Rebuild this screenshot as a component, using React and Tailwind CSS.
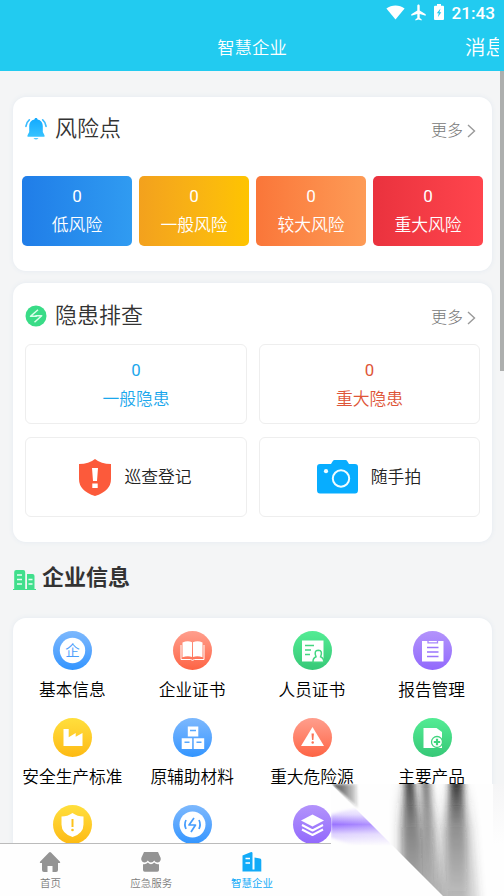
const FONT = "font-['Roboto','Noto_Sans_CJK_SC',sans-serif]";

function StatusBar() {
  return (
    <div className="flex h-6 items-center justify-end pr-[9px] text-white">
      <svg className="mr-[6px] h-[15px] w-[19px]" viewBox="0 0 19 15" fill="currentColor">
        <path d="M9.5 14.5 0.4 3.6C5.5-.5 13.5-.5 18.6 3.6Z" />
      </svg>
      <svg className="mr-[8px] h-[17px] w-[15px]" viewBox="0 0 15 17" fill="currentColor">
        <path d="M7.5.5c.8 0 1.2.6 1.2 1.4v4.6l6 3.8v1.5l-6-1.9v4l1.9 1.3v1.2l-3.1-.9-3.1.9v-1.2l1.9-1.3v-4l-6 1.9v-1.5l6-3.8V1.9C6.300 1.1 6.700.5 7.500.5Z" />
      </svg>
      <svg className="mr-[7px] h-4 w-[10px]" viewBox="0 0 10 16">
        <path d="M3 0h4v1.800h2q1 0 1 1V15q0 1-1 1H1q-1 0-1-1V2.800q0-1 1-1h2Z" fill="#fff" />
        <path d="M6.500 4.500 2.800 9.300h2L3.800 13.200 7.300 8.300H5.400Z" fill="#22caee" />
      </svg>
      <span className="mt-[2px] text-[17.200px] leading-5 font-medium">21:43</span>
    </div>
  );
}

function Header() {
  return (
    <header className="h-[71px] shrink-0 bg-[#22cbf0] text-white">
      <StatusBar />
      <div className="grid h-[47px] grid-cols-[1fr_auto_1fr] items-center">
        <span />
        <h1 className="text-[17.400px] leading-6 font-normal [font-weight:350]">智慧企业</h1>
        <span className="mt-px mr-[5px] ml-auto w-[34px] overflow-hidden text-[20.500px] leading-7 whitespace-nowrap [font-weight:350]">消息</span>
      </div>
    </header>
  );
}

function Bell() {
  return (
    <svg className="h-[22px] w-[22px]" viewBox="0 0 22 22">
      <defs>
        <linearGradient id="bell" x2="0" y2="1">
          <stop stopColor="#12a9ff" />
          <stop offset="1" stopColor="#37c3ff" />
        </linearGradient>
      </defs>
      <path d="M11 0c1 0 1.500.7 1.600 1.500 3.400.7 5.200 3.300 5.200 6.500v6l1.700 3.200v1.500H2.500v-1.500L4.200 14V8c0-3.200 1.800-5.800 5.200-6.500C9.500.7 10 0 11 0Z" fill="url(#bell)" />
      <path d="M8.500 20h5q-2.500 3-5 0Z" fill="#55c8ff" />
      <path d="M4.300 1.800Q1.300 4.300.9 8.300M17.700 1.800q3 2.500 3.400 6.500" fill="none" stroke="#3cbcff" strokeWidth="1.700" strokeLinecap="round" />
    </svg>
  );
}

function Bolt() {
  return (
    <svg className="h-[22px] w-[22px]" viewBox="0 0 22 22">
      <circle cx="11" cy="11" r="10.500" fill="#39dc87" />
      <path d="M13 4.700 5.500 11.300h6.300M9.500 17.300l7.200-6.600h-6.300" fill="none" stroke="#d9ffea" strokeWidth="1.500" strokeLinejoin="round" />
    </svg>
  );
}

function CardHead({ icon, title, className }) {
  return (
    <div className={`flex items-center pr-4 pl-3 ${className}`}>
      {icon}
      <h2 className="ml-2 text-[22px] leading-8 font-normal text-[#333] [font-weight:350]">{title}</h2>
      <span className="mt-[3px] ml-auto text-[16px] leading-6 font-light text-[#777]">更多</span>
      <svg className="mt-1 ml-[4px] h-[14px] w-[9px]" viewBox="0 0 9 14" fill="none" stroke="#999" strokeWidth="1.400">
        <path d="m1 1 6.500 6L1 13" />
      </svg>
    </div>
  );
}

const RISKS = [
  ['低风险', 'bg-linear-to-r from-[#207de8] to-[#309bf1]'],
  ['一般风险', 'bg-linear-to-r from-[#f3a11d] to-[#fec400]'],
  ['较大风险', 'bg-linear-to-r from-[#fa7639] to-[#fd9b56]'],
  ['重大风险', 'bg-linear-to-r from-[#ea323e] to-[#ff454d]'],
];

function RiskCard() {
  return (
    <section className="h-[174px] shrink-0 rounded-[13px] bg-white shadow-[0_0_5px_#e3e9f0]">
      <CardHead icon={<Bell />} title="风险点" className="pt-4" />
      <div className="mt-[31px] grid grid-cols-4 gap-[7px] px-[9px]">
        {RISKS.map(([label, bg]) => (
          <div key={label} className={`flex h-[70px] flex-col items-center rounded-[5px] pt-[8px] text-white ${bg}`}>
            <span className="text-[17px] leading-6">0</span>
            <span className="mt-[5px] text-[16.800px] leading-6 [font-weight:350]">{label}</span>
          </div>
        ))}
      </div>
    </section>
  );
}

function Shield() {
  return (
    <svg className="h-[37px] w-8" viewBox="0 0 32 37">
      <path d="M16 0q6 5 16 5v15q0 12-16 17Q0 32 0 20V5Q10 5 16 0Z" fill="#fc5a3b" />
      <path d="M13 9h6l-1 13h-4ZM13.300 24.500h5.400V29h-5.400Z" fill="#fff" />
    </svg>
  );
}

function Camera() {
  return (
    <svg className="h-[34px] w-[41px]" viewBox="0 0 41 34">
      <path d="M3 4h11l2-3.300Q16.500 0 17.500 0h11q1 0 1.500.7L32 4H38q3 0 3 3v23q0 3.500-3 3.500H3q-3 0-3-3.500V7q0-3 3-3Z" fill="#07adff" />
      <circle cx="24" cy="18.500" r="8.200" fill="none" stroke="#effcff" strokeWidth="2" />
      <circle cx="9" cy="11.200" r="2.100" fill="#effcff" />
    </svg>
  );
}

function HazardCard() {
  const box = 'flex h-20 items-center justify-center rounded-[6px] border border-[#eee]';
  return (
    <section className="mt-[12px] h-[259px] shrink-0 rounded-[13px] bg-white shadow-[0_0_5px_#e3e9f0]">
      <CardHead icon={<Bolt />} title="隐患排查" className="pt-[17px]" />
      <div className="mt-[12px] grid grid-cols-[222px_221px] gap-x-[12px] gap-y-[13px] pl-3 text-[16.800px] leading-6">
        <div className={`${box} flex-col gap-[5px] text-[#1ba7ec]`}>
          <span>0</span>
          <span className="[font-weight:350]">一般隐患</span>
        </div>
        <div className={`${box} flex-col gap-[5px] text-[#de5538]`}>
          <span>0</span>
          <span className="[font-weight:350]">重大隐患</span>
        </div>
        <div className={`${box} gap-[13px] pr-px text-[#222]`}>
          <Shield />
          <span className="[font-weight:350]">巡查登记</span>
        </div>
        <div className={`${box} gap-[13px] pr-px text-[#222]`}>
          <Camera />
          <span className="[font-weight:350]">随手拍</span>
        </div>
      </div>
    </section>
  );
}

function SectionTitle() {
  return (
    <div className="flex h-[76px] shrink-0 items-center">
      <svg className="h-5 w-[23px]" viewBox="0 0 23 20">
        <path d="M1.200 19V2q0-2 2-2h7q2 0 2 2v17h1.800V4h5.500Q21.500 4 21.500 6v13H23v1H0v-1Z" fill="#40df8c" />
        <path d="M4 5h5M4 9.500h5M4 14h5M15.500 9.500h4M15.500 14h4" stroke="#e5fff1" strokeWidth="1.300" />
      </svg>
      <h2 className="mb-[5px] ml-[6px] text-[22px] leading-8 font-bold text-[#333]">企业信息</h2>
    </div>
  );
}

const GLYPHS = {
  company: (
    <>
      <circle cx="19.500" cy="19.500" r="12.700" fill="#fff" />
      <text x="19.500" y="24.700" textAnchor="middle" fontSize="14.500" fontWeight="350" fill="#4b9efc">企</text>
    </>
  ),
  book: (
    <>
      <path d="M9.500 11.500Q15 9 19 11.300V26q-4-1.700-9.500.2ZM20 11.300Q24.500 9 29.500 11.500v14.700Q24.500 24.300 20 26Z" fill="#fff" />
      <path d="M8 14v14.500h9.500l2 .8 2-.8H31V14" fill="none" stroke="#fff" strokeWidth="1" />
    </>
  ),
  person: (
    <>
      <path d="M9 9.500h21.500v21H9Z" fill="#fff" />
      <path d="M12 14.500h9M12 19h6M12 23.500h5" stroke="#43d681" strokeWidth="1.600" />
      <path d="M20 31.200q-.2-4.200 3-5.400-2.500-6.500 2.300-6.600 4.800.1 2.300 6.600 3.200 1.200 3.200 5.400Z" fill="#fff" stroke="#43d681" strokeWidth="1.500" />
    </>
  ),
  clipboard: (
    <>
      <path d="M9 10h21.500v20.500H9Z" fill="#fff" />
      <path d="M14 16.500h11.500M14 21h11.500M14 25.500h11.500" stroke="#9b76fb" strokeWidth="1.500" />
      <path d="M15 10v1.800h9.500V10" fill="#fff" stroke="#a786fb" strokeWidth="1.300" />
    </>
  ),
  factory: <path d="M10.500 11h5.200v8.300l7-4.300v3.800l6.800-3.800V28h-19Z" fill="#fff" />,
  boxes: (
    <>
      <path d="M14.800 8.500h10.500v10H14.800ZM8.700 20.200h10.500V31H8.700ZM20.700 20.200h10.500V31H20.700Z" fill="#fff" />
      <path d="M17 12.500h6M11.500 24.200h5M23.500 24.200h5" stroke="#57a7fd" strokeWidth="1.400" />
    </>
  ),
  warning: (
    <>
      <path d="M19.500 9 31 28H8Z" fill="#fff" />
      <path d="M18.500 15.500h2.400l-.5 6.500h-1.400Z" fill="#fc7254" />
      <circle cx="19.700" cy="24.500" r="1.200" fill="#fc7254" />
    </>
  ),
  product: (
    <>
      <path d="M10.500 10h13l5.500 4v16H10.500Z" fill="#fff" />
      <circle cx="24" cy="24" r="5.500" fill="#fff" stroke="#40d47e" strokeWidth="1.300" />
      <path d="M20.800 24h6.400M24 20.800v6.400" stroke="#40d47e" strokeWidth="2.200" />
    </>
  ),
  shield: (
    <>
      <path d="M19.500 8q5 3.500 11 3.500v8q0 9-11 12.500-11-3.500-11-12.500v-8q6 0 11-3.500Z" fill="#fff" />
      <path d="M19.500 14v8" stroke="#fdc21b" strokeWidth="2" />
      <circle cx="19.500" cy="25" r="1.300" fill="#fdc21b" />
    </>
  ),
  energy: (
    <>
      <circle cx="19.500" cy="19.500" r="13" fill="#fff" />
      <path d="m21 13-5 7h6.500l-4.500 7M13 15q-2.200 4.500 0 9M26 15q2.200 4.500 0 9" fill="none" stroke="#469dfe" strokeWidth="1.700" strokeLinejoin="round" />
    </>
  ),
  layers: (
    <>
      <path d="M19.500 9.500 31 15.500l-11.500 6L8 15.500Z" fill="#fff" />
      <path d="m9 20 10.500 5.500L30 20M9 24.500 19.500 30 30 24.500" fill="none" stroke="#fff" strokeWidth="2" strokeLinejoin="round" />
    </>
  ),
};

const TONES = {
  blue: 'bg-linear-to-b from-[#7cb8fd] to-[#3195ff]',
  red: 'bg-linear-to-b from-[#ff9e8d] to-[#fd6343]',
  green: 'bg-linear-to-b from-[#53ec94] to-[#36c877]',
  purple: 'bg-linear-to-b from-[#b393fb] to-[#9268fc]',
  yellow: 'bg-linear-to-b from-[#ffdf3c] to-[#fdba10]',
};

const ENTRIES = [
  ['company', 'blue', '基本信息'],
  ['book', 'red', '企业证书'],
  ['person', 'green', '人员证书'],
  ['clipboard', 'purple', '报告管理'],
  ['factory', 'yellow', '安全生产标准'],
  ['boxes', 'blue', '原辅助材料'],
  ['warning', 'red', '重大危险源'],
  ['product', 'green', '主要产品'],
  ['shield', 'yellow', ''],
  ['energy', 'blue', ''],
  ['layers', 'purple', ''],
];

function InfoCard() {
  return (
    <section className="grid h-[300px] shrink-0 auto-rows-[87px] grid-cols-4 rounded-[13px] bg-white pt-[13px] shadow-[0_0_5px_#e3e9f0]">
      {ENTRIES.map(([glyph, tone, label]) => (
        <div key={glyph} className="flex flex-col items-center">
          <span className={`h-[39px] w-[39px] rounded-full ${TONES[tone]}`}>
            <svg className="h-full w-full" viewBox="0 0 39 39">{GLYPHS[glyph]}</svg>
          </span>
          <span className="mt-[9px] pr-px text-[16.700px] leading-6 whitespace-nowrap text-black [font-weight:350]">{label}</span>
        </div>
      ))}
    </section>
  );
}

function TabBar() {
  const tab = 'flex flex-col items-center pt-[7px] text-[10.500px] leading-4 [font-weight:350]';
  const icon = 'mb-[3px] h-[22px] w-[22px]';
  return (
    <nav className="grid h-[53px] shrink-0 grid-cols-5 border-t border-[#bbb] bg-[#fefefe]">
      <div className={`${tab} text-[#7c7c7c]`}>
        <svg className={icon} viewBox="0 0 22 22" fill="#949494">
          <path d="M10 1.500q1-1 2 0l9 9.300q.7 1.200-.5 1.200H19v7q0 2-2 2h-3.500v-6h-5v6H5q-2 0-2-2v-7H1.500Q.3 12 1 10.800Z" />
        </svg>
        首页
      </div>
      <div className={`${tab} text-[#7c7c7c]`}>
        <svg className={icon} viewBox="0 0 22 22" fill="#949494">
          <path d="M4 1h14l2.700 6v2q-1 2.500-3.200 2.500T14.200 9.500q-1.200 2-3.200 2t-3.200-2q-1.200 2-3.300 2T1.300 9V7Z" />
          <path d="M3 13.200q3 .5 4.800-1.700 3.200 3.400 6.400 0 1.800 2.200 4.800 1.700V19q0 1.700-1.700 1.700H4.700Q3 20.700 3 19Z" />
        </svg>
        应急服务
      </div>
      <div className={`${tab} text-[#12abf8]`}>
        <svg className={icon} viewBox="0 0 22 22" fill="currentColor">
          <path d="M1.500 4.500 9.500 1.200q2-.5 2 1V18.500h2V6.500l5.500 1q1.300.3 1.300 1.500v11.500H1.500Z" />
          <path d="M4.500 7.500H9M4.500 12h4.500" stroke="#fff" strokeWidth="1.500" />
        </svg>
        <span className="font-normal">智慧企业</span>
      </div>
    </nav>
  );
}

/* Curled-corner smear laid over the lower right of the screen. */
function CornerSmear() {
  return (
    <svg className="absolute right-0 bottom-0 h-[112px] w-[173px]" viewBox="0 0 173 112">
      <defs>
        <linearGradient id="ink" gradientUnits="userSpaceOnUse" x1="0" y1="0" x2="0" y2="112">
          <stop stopColor="#222" stopOpacity=".9" />
          <stop offset=".15" stopColor="#222" stopOpacity=".68" />
          <stop offset=".4" stopColor="#222" stopOpacity=".36" />
          <stop offset="1" stopColor="#222" stopOpacity=".12" />
        </linearGradient>
        <linearGradient id="wash" gradientUnits="userSpaceOnUse" x1="0" y1="0" x2="0" y2="112">
          <stop stopColor="#333" stopOpacity=".05" />
          <stop offset=".4" stopColor="#333" stopOpacity=".32" />
          <stop offset="1" stopColor="#333" stopOpacity=".32" />
        </linearGradient>
        <linearGradient id="tail">
          <stop stopColor="#222" stopOpacity=".85" />
          <stop offset=".5" stopColor="#222" stopOpacity=".5" />
          <stop offset=".8" stopColor="#222" stopOpacity=".25" />
          <stop offset="1" stopColor="#222" stopOpacity="0" />
        </linearGradient>
        <linearGradient id="violet" gradientUnits="userSpaceOnUse" x1="0" y1="22" x2="0" y2="62">
          <stop stopColor="#8658ff" stopOpacity="0" />
          <stop offset=".22" stopColor="#8658ff" stopOpacity=".25" />
          <stop offset=".46" stopColor="#8658ff" stopOpacity=".85" />
          <stop offset=".7" stopColor="#8658ff" stopOpacity=".28" />
          <stop offset="1" stopColor="#8658ff" stopOpacity="0" />
        </linearGradient>
        <linearGradient id="violetFade" gradientUnits="userSpaceOnUse" x1="0" y1="0" x2="60" y2="0">
          <stop stopColor="#fff" />
          <stop offset="1" stopColor="#aaa" />
        </linearGradient>
        <mask id="violetMask" maskUnits="userSpaceOnUse" x="0" y="0" width="112" height="112">
          <path d="M0 30 60 14V76L0 54Z" fill="url(#violetFade)" filter="url(#edge)" />
          <path d="M60 0h52v112H60Z" fill="#aaa" />
        </mask>
        <linearGradient id="cover" gradientUnits="userSpaceOnUse" x1="0" y1="0" x2="0" y2="60">
          <stop stopColor="#f5f5f6" />
          <stop offset="1" stopColor="#fefefe" />
        </linearGradient>
        <clipPath id="upper"><path d="M0 0h173v112H112Z" /></clipPath>
        <clipPath id="lower"><path d="M0 0 112 112H0Z" /></clipPath>
        <filter id="soft" filterUnits="userSpaceOnUse" x="-20" y="-20" width="213" height="152">
          <feGaussianBlur stdDeviation="3 0" />
        </filter>
        <filter id="softer" filterUnits="userSpaceOnUse" x="-20" y="-20" width="213" height="152">
          <feGaussianBlur stdDeviation="5 0" />
        </filter>
        <filter id="edge" filterUnits="userSpaceOnUse" x="-20" y="-20" width="213" height="152">
          <feGaussianBlur stdDeviation="1 1.500" />
        </filter>
      </defs>
      <path d="M0 0h173v112H0Z" fill="#fefefe" />
      <path d="M162 0h7v60h-7Z" fill="url(#cover)" />
      <path d="M169 0h4v60h-4Z" fill="url(#cover)" />
      <g clipPath="url(#upper)">
        <path d="M1 0h25l2 25Z" fill="url(#tail)" filter="url(#edge)" />
        <path d="M68 0H100L113 112H68Z" fill="url(#wash)" filter="url(#softer)" />
        <path d="M74 0H83L90 60 92 112H72V50Z" fill="url(#ink)" filter="url(#soft)" />
        <path d="M91 0H99L101 30 102 112H92V40Z" fill="url(#ink)" opacity=".7" filter="url(#soft)" />
        <path d="M119 0H132L135 60 136 112H116V50Z" fill="url(#ink)" filter="url(#soft)" />
        <path d="M112 0H138L147 112H106Z" fill="url(#wash)" opacity=".7" filter="url(#softer)" />
      </g>
      <g clipPath="url(#lower)">
        <path d="M0 20H80V66H0Z" fill="url(#violet)" mask="url(#violetMask)" />
      </g>
    </svg>
  );
}

export default function App() {
  return (
    <div className={`relative flex h-[896px] w-[504px] flex-col overflow-hidden bg-[#f4f5f6] ${FONT}`}>
      <Header />
      <div className="flex min-h-0 flex-1 overflow-hidden">
        <main className="flex min-w-0 flex-1 flex-col pt-[26px] pr-2 pl-[13px]">
          <RiskCard />
          <HazardCard />
          <SectionTitle />
          <InfoCard />
        </main>
        <div className="h-[300px] w-[4px] shrink-0 bg-[#adafae]" />
      </div>
      <TabBar />
      <CornerSmear />
    </div>
  );
}
